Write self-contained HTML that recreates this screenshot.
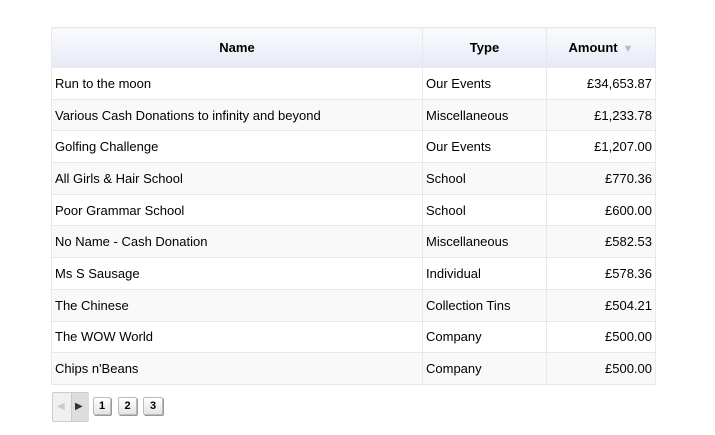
<!DOCTYPE html>
<html><head><style>
body{margin:0;width:715px;height:435px;background:#fff;font-family:"Liberation Sans",Arial,sans-serif;font-size:13px;color:#000;position:relative;overflow:hidden}
table{position:absolute;left:51px;top:27px;width:604px;border-collapse:collapse;table-layout:fixed}
td,th{border:1px solid #e8e8e8;padding:0 3px;height:30.7px}
th{height:39px;background:linear-gradient(#fafbfe,#e6eaf5);font-weight:bold;font-size:13px}
tr:nth-child(odd) td{background:#f9f9f9}
td.r{text-align:right}
.tri{color:#bbb;font-size:11px;margin-left:5px}
.pg{position:absolute;top:392px;left:52px;height:28px;width:35px;border:1px solid #ccc;background:#f0f0f0;border-radius:2px}
.pg span{position:absolute;top:8px;font-size:10px}
.b{position:absolute;top:397px;height:16px;border:1px solid #bbb;border-radius:2px;background:linear-gradient(#fff,#e4e4e4);font-size:11px;font-weight:bold;text-align:center;line-height:17px;box-shadow:1px 1px 0 #999}
</style></head><body>
<table>
<colgroup><col style="width:371px"><col style="width:124px"><col style="width:109px"></colgroup>
<tr><th>Name</th><th>Type</th><th>Amount<span class="tri">▼</span></th></tr>
<tr><td>Run to the moon</td><td>Our Events</td><td class="r">£34,653.87</td></tr>
<tr><td>Various Cash Donations to infinity and beyond</td><td>Miscellaneous</td><td class="r">£1,233.78</td></tr>
<tr><td>Golfing Challenge</td><td>Our Events</td><td class="r">£1,207.00</td></tr>
<tr><td>All Girls &amp; Hair School</td><td>School</td><td class="r">£770.36</td></tr>
<tr><td>Poor Grammar School</td><td>School</td><td class="r">£600.00</td></tr>
<tr><td>No Name - Cash Donation</td><td>Miscellaneous</td><td class="r">£582.53</td></tr>
<tr><td>Ms S Sausage</td><td>Individual</td><td class="r">£578.36</td></tr>
<tr><td>The Chinese</td><td>Collection Tins</td><td class="r">£504.21</td></tr>
<tr><td>The WOW World</td><td>Company</td><td class="r">£500.00</td></tr>
<tr><td>Chips n'Beans</td><td>Company</td><td class="r">£500.00</td></tr>
</table>
<div class="pg"><span style="left:4px;color:#ccc">◀</span><div style="position:absolute;left:18px;top:0;width:17px;height:28px;background:#ddd;border-left:1px solid #ccc"></div><span style="left:22px;color:#333">▶</span></div>
<div class="b" style="left:93px;width:16px">1</div>
<div class="b" style="left:118px;width:17px">2</div>
<div class="b" style="left:143px;width:18px">3</div>
</body></html>
